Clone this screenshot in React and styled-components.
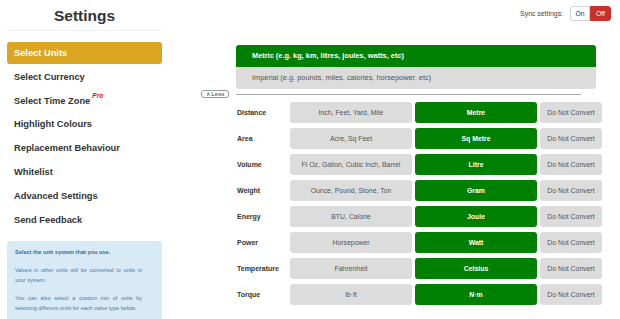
import React from "react";
import styled, { createGlobalStyle } from "styled-components";

const GlobalStyle = createGlobalStyle`
  html, body {
    margin: 0;
    padding: 0;
    background: #fff;
  }
  body {
    font-family: "Liberation Sans", Arial, Helvetica, sans-serif;
    color: #333;
  }
`;

// Layout
const Page = styled.div`
  display: flex;
  width: 620px;
  height: 319px;
  overflow: hidden;
`;

const Sidebar = styled.div`
  width: 155px;
  padding: 0 8px 0 7px;
  flex-shrink: 0;
`;

const Title = styled.h1`
  margin: 0;
  height: 30px;
  line-height: 31px;
  text-align: center;
  font-size: 15.5px;
  font-weight: bold;
  color: #333;
  border-bottom: 1px solid #eee;
`;

const Nav = styled.div`
  display: flex;
  flex-direction: column;
  gap: 1.8px;
  margin-top: 11px;
`;

const NavItem = styled.div`
  height: 22px;
  line-height: 22px;
  padding-left: 7px;
  border-radius: 3px;
  font-size: 9.3px;
  font-weight: bold;
  color: ${(p) => (p.$active ? "#fff" : "#333")};
  background: ${(p) => (p.$active ? "#daa520" : "transparent")};
`;

const Pro = styled.span`
  display: inline-block;
  color: #f00;
  font-style: italic;
  font-size: 6.5px;
  line-height: 0;
  margin-left: 2px;
  vertical-align: top;
  position: relative;
  top: 6px;
`;

const InfoBox = styled.div`
  margin-top: 10px;
  background: #d9eaf7;
  border-radius: 3px;
  padding: 6px 20px 1px 8px;
  color: #4a7aa0;
  line-height: 10px;
`;

const InfoText = styled.p`
  margin: 0 0 8px 0;
  text-align: justify;
  font-weight: ${(p) => (p.$strong ? "bold" : "normal")};
  font-size: ${(p) => (p.$strong ? "5.6px" : "5.5px")};
  color: ${(p) => (p.$strong ? "#3a6a94" : "#4a7aa0")};
`;

const Main = styled.div`
  flex: 1;
  display: flex;
  flex-direction: column;
  padding-left: 31px;
`;

const TopBar = styled.div`
  display: flex;
  justify-content: flex-end;
  align-items: center;
  padding: 6px 9px 0 0;
  height: 15px;
`;

const SyncLabel = styled.span`
  font-size: 6.9px;
  color: #444;
  margin-right: 7px;
`;

const Toggle = styled.div`
  display: flex;
  height: 15px;
`;

const ToggleBtn = styled.div`
  width: ${(p) => (p.$on ? "21px" : "20px")};
  box-sizing: border-box;
  display: flex;
  align-items: center;
  justify-content: center;
  font-size: 6.8px;
  color: ${(p) => (p.$on ? "#fff" : "#333")};
  background: ${(p) => (p.$on ? "#c9302c" : "#fff")};
  border: 1px solid ${(p) => (p.$on ? "#c9302c" : "#d4d4d4")};
  border-radius: ${(p) => (p.$first ? "3px 0 0 3px" : "0 3px 3px 0")};
`;

const Content = styled.div`
  margin-left: 35px;
`;

const SystemBox = styled.div`
  margin-top: 24px;
  width: 360px;
  border-radius: 3px;
  overflow: hidden;
`;

const SystemOption = styled.div`
  height: 22px;
  line-height: 22px;
  padding-left: 16px;
  font-size: 7.4px;
  font-weight: ${(p) => (p.$selected ? "bold" : "normal")};
  color: ${(p) => (p.$selected ? "#fff" : "#555")};
  background: ${(p) => (p.$selected ? "#008000" : "#dcdcdc")};
`;

const LessRow = styled.div`
  display: flex;
  align-items: center;
  margin: 1px 0 0 -35px;
  height: 8px;
`;

const LessButton = styled.div`
  width: 28px;
  height: 8px;
  box-sizing: border-box;
  border: 1px solid #999;
  border-radius: 3px;
  font-size: 6.2px;
  line-height: 6px;
  text-align: center;
  color: #444;
`;

const Rule = styled.div`
  margin-left: 7px;
  width: 345px;
  height: 1px;
  background: #aaa;
`;

const UnitGrid = styled.div`
  display: grid;
  grid-template-columns: 51px 122px 122px 62px;
  grid-auto-rows: 21px;
  column-gap: 3px;
  row-gap: 5px;
  margin-top: 4px;
`;

const RowLabel = styled.div`
  display: flex;
  align-items: center;
  padding-left: 1px;
  font-size: 7px;
  font-weight: bold;
  color: #333;
`;

const Cell = styled.div`
  display: flex;
  align-items: center;
  justify-content: center;
  border-radius: 3px;
  font-size: 6.9px;
  font-weight: ${(p) => (p.$selected ? "bold" : "normal")};
  color: ${(p) => (p.$selected ? "#fff" : "#555")};
  background: ${(p) => (p.$selected ? "#008000" : "#dcdcdc")};
`;

const navItems = [
  "Select Units",
  "Select Currency",
  "Select Time Zone",
  "Highlight Colours",
  "Replacement Behaviour",
  "Whitelist",
  "Advanced Settings",
  "Send Feedback",
];

const units = [
  ["Distance", "Inch, Feet, Yard, Mile", "Metre"],
  ["Area", "Acre, Sq Feet", "Sq Metre"],
  ["Volume", "Fl Oz, Gallon, Cubic Inch, Barrel", "Litre"],
  ["Weight", "Ounce, Pound, Stone, Ton", "Gram"],
  ["Energy", "BTU, Calorie", "Joule"],
  ["Power", "Horsepower", "Watt"],
  ["Temperature", "Fahrenheit", "Celsius"],
  ["Torque", "lb·ft", "N·m"],
];

export default function App() {
  return (
    <Page>
      <GlobalStyle />
      <Sidebar>
        <Title>Settings</Title>
        <Nav>
          {navItems.map((item, i) => (
            <NavItem key={item} $active={i === 0}>
              {item}
              {item === "Select Time Zone" && <Pro>Pro</Pro>}
            </NavItem>
          ))}
        </Nav>
        <InfoBox>
          <InfoText $strong>Select the unit system that you use.</InfoText>
          <InfoText>
            Values in other units will be converted to units in your system.
          </InfoText>
          <InfoText>
            You can also select a custom mix of units by selecting different
            units for each value type below.
          </InfoText>
        </InfoBox>
      </Sidebar>
      <Main>
        <TopBar>
          <SyncLabel>Sync settings:</SyncLabel>
          <Toggle>
            <ToggleBtn $first>On</ToggleBtn>
            <ToggleBtn $on>Off</ToggleBtn>
          </Toggle>
        </TopBar>
        <Content>
          <SystemBox>
            <SystemOption $selected>
              Metric (e.g. kg, km, litres, joules, watts, etc)
            </SystemOption>
            <SystemOption>
              Imperial (e.g. pounds, miles, calories, horsepower, etc)
            </SystemOption>
          </SystemBox>
          <LessRow>
            <LessButton>∧ Less</LessButton>
            <Rule />
          </LessRow>
          <UnitGrid>
            {units.map(([label, imperial, metric]) => (
              <React.Fragment key={label}>
                <RowLabel>{label}</RowLabel>
                <Cell>{imperial}</Cell>
                <Cell $selected>{metric}</Cell>
                <Cell>Do Not Convert</Cell>
              </React.Fragment>
            ))}
          </UnitGrid>
        </Content>
      </Main>
    </Page>
  );
}
